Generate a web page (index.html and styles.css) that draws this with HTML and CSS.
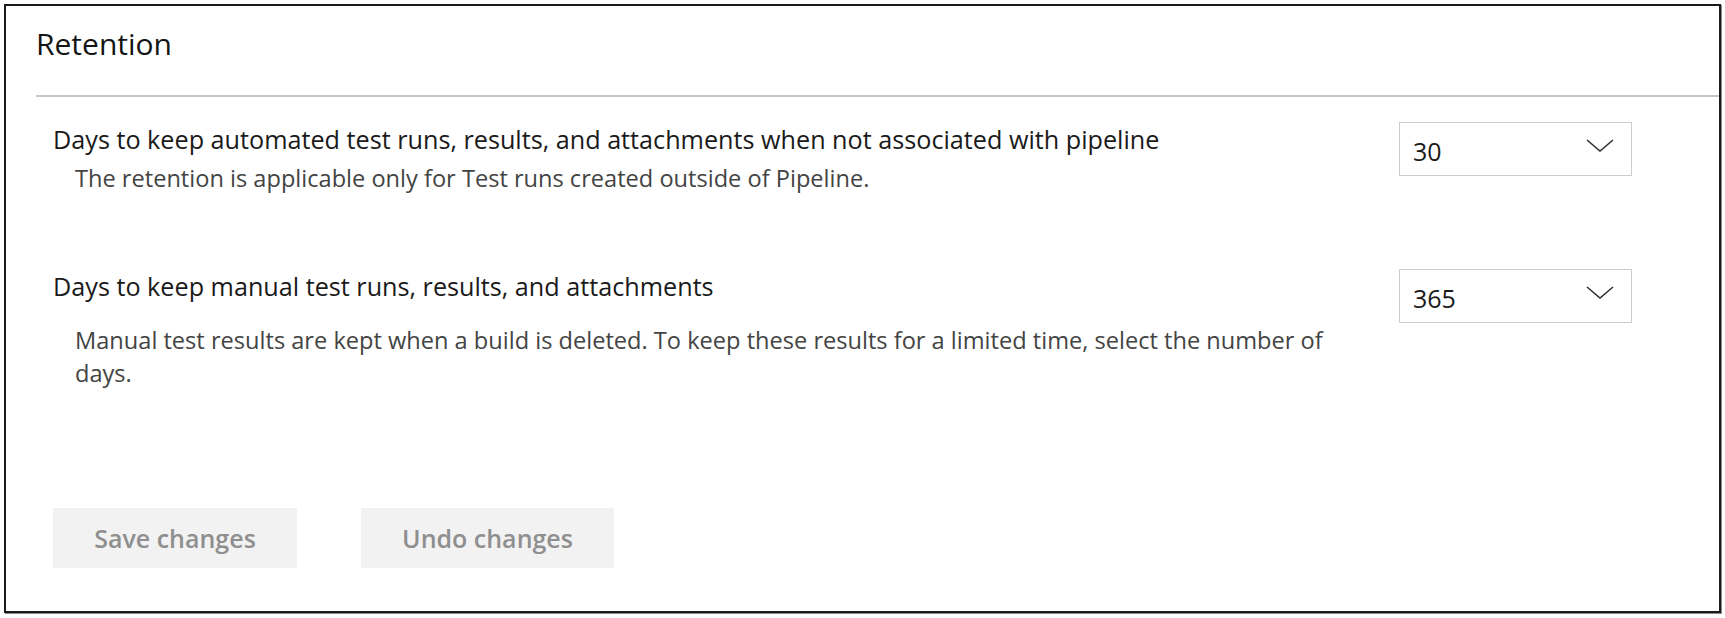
FILE: index.html
```html
<!DOCTYPE html>
<html lang="en">
<head>
<meta charset="utf-8">
<title>Retention</title>
<link rel="stylesheet" href="styles.css">
</head>
<body>
<section class="panel">
  <header class="panel-header">
    <h2 class="panel-title">Retention</h2>
  </header>
  <div class="settings">
    <div class="setting">
      <div class="setting-text">
        <div class="setting-label">Days to keep automated test runs, results, and attachments when not associated with pipeline</div>
        <div class="setting-desc">The retention is applicable only for Test runs created outside of Pipeline.</div>
      </div>
      <div class="dropdown">
        <span class="dropdown-value">30</span>
        <svg class="chevron" width="28" height="13" viewBox="0 0 28 13"><path d="M1 1 L14 12 L27 1" fill="none" stroke="#333" stroke-width="1.6"/></svg>
      </div>
    </div>
    <div class="setting">
      <div class="setting-text">
        <div class="setting-label">Days to keep manual test runs, results, and attachments</div>
        <div class="setting-desc setting-desc--spaced">Manual test results are kept when a build is deleted. To keep these results for a limited time, select the number of days.</div>
      </div>
      <div class="dropdown">
        <span class="dropdown-value">365</span>
        <svg class="chevron" width="28" height="13" viewBox="0 0 28 13"><path d="M1 1 L14 12 L27 1" fill="none" stroke="#333" stroke-width="1.6"/></svg>
      </div>
    </div>
  </div>
  <div class="actions">
    <button class="btn" disabled>Save changes</button>
    <button class="btn btn--wide" disabled>Undo changes</button>
  </div>
</section>
</body>
</html>
```

FILE: styles.css
```css
* { box-sizing: border-box; }
html, body { margin: 0; padding: 0; background: #ffffff; }
body {
  font-family: "Segoe UI", "Open Sans", "Noto Sans", sans-serif;
  color: #1f1f1f;
  width: 1725px;
  height: 618px;
  overflow: hidden;
}
.panel {
  margin: 4px 0 0 4px;
  width: 1717px;
  height: 609px;
  border: 2px solid #1a1a1a;
  box-shadow: 1px 1px 0 #8a8a8a;
  display: flex;
  flex-direction: column;
}
.panel-header {
  margin-left: 30px;
  height: 91px;
  border-bottom: 2px solid #c6c6c6;
  padding-top: 19px;
}
.panel-title {
  margin: 0;
  font-size: 30px;
  font-weight: 400;
  line-height: 38px;
  color: #141414;
}
.settings {
  padding: 25px 87px 0 47px;
  display: flex;
  flex-direction: column;
  gap: 74px;
}
.setting {
  display: flex;
  align-items: flex-start;
  justify-content: space-between;
}
.setting-text {
  width: 1300px;
}
.setting-label {
  font-size: 25.2px;
  line-height: 34px;
  color: #1a1a1a;
}
.setting-desc {
  margin-top: 6px;
  padding-left: 22px;
  font-size: 23.6px;
  line-height: 33px;
  color: #444444;
}
.setting-desc--spaced { margin-top: 21px; }
.dropdown {
  width: 233px;
  height: 54px;
  border: 1px solid #cdcdcd;
  display: flex;
  align-items: center;
  justify-content: space-between;
  padding: 0 17px 0 13px;
}
.dropdown-value {
  font-size: 25px;
  color: #1a1a1a;
  padding-top: 4px;
}
.chevron { margin-top: -8px; }
.actions {
  margin-top: auto;
  margin-bottom: 43px;
  padding-left: 47px;
  display: flex;
  gap: 64px;
}
.btn {
  font-family: inherit;
  width: 244px;
  height: 60px;
  border: 0;
  background: #f2f2f2;
  color: #8f8f8f;
  font-size: 25px;
  font-weight: 600;
}
.btn--wide { width: 253px; }
```
